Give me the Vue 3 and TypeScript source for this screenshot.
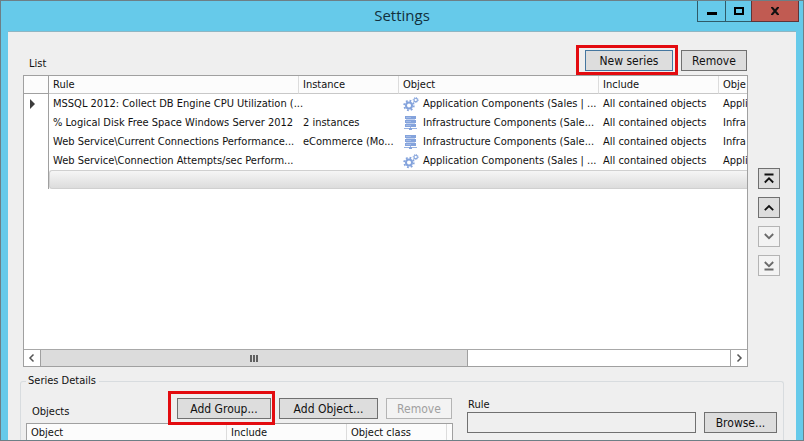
<script setup lang="ts">
import { ref } from 'vue'

type IconKind = 'gears' | 'servers'

interface Series {
  rule: string
  instance: string
  icon: IconKind
  object: string
  include: string
  objectClass: string
}

const series: Series[] = [
  { rule: 'MSSQL 2012: Collect DB Engine CPU Utilization (...', instance: '', icon: 'gears', object: 'Application Components (Sales | ...', include: 'All contained objects', objectClass: 'Appli' },
  { rule: '% Logical Disk Free Space Windows Server 2012', instance: '2 instances', icon: 'servers', object: 'Infrastructure Components (Sale...', include: 'All contained objects', objectClass: 'Infra' },
  { rule: 'Web Service\\Current Connections Performance...', instance: 'eCommerce (Mo...', icon: 'servers', object: 'Infrastructure Components (Sale...', include: 'All contained objects', objectClass: 'Infra' },
  { rule: 'Web Service\\Connection Attempts/sec Perform...', instance: '', icon: 'gears', object: 'Application Components (Sales | ...', include: 'All contained objects', objectClass: 'Appli' },
]

const moves = [
  { label: 'Move to top', path: 'M5.500 5.500h9M5.800 13.500l4.200-4.200 4.200 4.200', disabled: false },
  { label: 'Move up', path: 'M5.800 12.200l4.200-4.200 4.200 4.200', disabled: false },
  { label: 'Move down', path: 'M5.800 7l4.200 4.200 4.200-4.200', disabled: true },
  { label: 'Move to bottom', path: 'M5.800 6l4.200 4.200 4.200-4.200M5.500 13.500h9', disabled: true },
]

const selected = ref(0)
const rule = ref('')
</script>

<template>
  <div class="window">
    <header class="titlebar">
      <h1>Settings</h1>
      <div class="controls">
        <button type="button" class="control" aria-label="Minimize">
          <svg width="12" height="12" viewBox="0 0 12 12"><path d="M1 7h10v3H1z" fill="#000" /></svg>
        </button>
        <button type="button" class="control" aria-label="Maximize">
          <svg width="12" height="12" viewBox="0 0 12 12"><path d="M2 3h8v6H2z" fill="none" stroke="#000" stroke-width="2" /></svg>
        </button>
        <button type="button" class="control close" aria-label="Close">
          <svg width="12" height="12" viewBox="0 0 12 12">
            <path d="M3 2.5L9 9.5M9 2.5L3 9.5" fill="none" stroke="#111" stroke-width="2" />
            <path d="M2 2.5h2M8 2.5h2M2 9.5h2M8 9.5h2" stroke="#111" />
          </svg>
        </button>
      </div>
    </header>

    <main class="client">
      <div class="toolbar">
        <h2>List</h2>
        <span class="marked marked-new"><button type="button" class="btn new focused">New series</button></span>
        <button type="button" class="btn remove">Remove</button>
      </div>

      <div class="list-row">
        <div class="list">
          <div class="viewport">
            <table class="grid series">
              <colgroup>
                <col class="c-marker" /><col class="c-rule" /><col class="c-instance" />
                <col class="c-object" /><col class="c-include" /><col class="c-class" />
              </colgroup>
              <thead>
                <tr>
                  <th class="marker"></th>
                  <th>Rule</th>
                  <th>Instance</th>
                  <th>Object</th>
                  <th>Include</th>
                  <th>Obje</th>
                </tr>
              </thead>
              <tbody>
                <tr v-for="(item, i) in series" :key="i" @click="selected = i">
                  <td class="marker">
                    <svg v-if="selected === i" width="6" height="10" viewBox="0 0 6 10"><path d="M0 0l5 5-5 5z" fill="#3c3c3c" /></svg>
                  </td>
                  <td>{{ item.rule }}</td>
                  <td>{{ item.instance }}</td>
                  <td>
                    <span class="object">
                      <svg v-if="item.icon === 'gears'" width="16" height="16" viewBox="0 0 16 16" fill="none" stroke="#84a3dc">
                        <circle cx="6" cy="9.5" r="3" stroke-width="2" />
                        <circle cx="6" cy="9.5" r="4.8" stroke-width="1.8" stroke-dasharray="1.8 1.97" />
                        <circle cx="12.7" cy="4" r="1.7" stroke-width="1.1" />
                        <circle cx="12.7" cy="4" r="2.5" stroke-width="1" stroke-dasharray="1 .96" />
                      </svg>
                      <svg v-else width="16" height="16" viewBox="0 0 16 16">
                        <path d="M2 1h11v3H2zM2 5h11v3H2zM2 9h11v3H2z" fill="#84a3dc" />
                        <path d="M3 4.500h9M3 8.500h9" stroke="#c3d2ef" />
                        <path d="M3 2.500h5M3 6.500h5M3 10.500h5" stroke="#a3bae6" />
                        <path d="M7.500 12v2M1 13.500h13" stroke="#9ab3e2" />
                        <path d="M6 13h3v2H6z" fill="#84a3dc" />
                      </svg>
                      {{ item.object }}
                    </span>
                  </td>
                  <td>{{ item.include }}</td>
                  <td>{{ item.objectClass }}</td>
                </tr>
                <tr class="blank">
                  <td class="marker"></td>
                  <td colspan="5"></td>
                </tr>
              </tbody>
            </table>
          </div>
          <div class="scrollbar">
            <button type="button" class="arrow" aria-label="Scroll left">
              <svg width="8" height="10" viewBox="0 0 8 10"><path d="M5.500 1.500L2 5l3.500 3.500" fill="none" stroke="#555" stroke-width="1.500" /></svg>
            </button>
            <div class="track">
              <div class="thumb"><i></i><i></i><i></i></div>
            </div>
            <button type="button" class="arrow right" aria-label="Scroll right">
              <svg width="8" height="10" viewBox="0 0 8 10"><path d="M2.500 1.500L6 5 2.500 8.500" fill="none" stroke="#555" stroke-width="1.500" /></svg>
            </button>
          </div>
        </div>
        <div class="moves">
          <button v-for="move in moves" :key="move.label" type="button" class="btn move" :aria-label="move.label" :disabled="move.disabled">
            <svg width="20" height="19" viewBox="0 0 20 19"><path :d="move.path" fill="none" stroke="currentColor" stroke-width="1.800" /></svg>
          </button>
        </div>
      </div>

      <fieldset class="details">
        <legend>Series Details</legend>
        <div class="detail-row">
          <section class="objects">
            <div class="object-bar">
              <h2>Objects</h2>
              <span class="marked marked-group"><button type="button" class="btn group">Add Group...</button></span>
              <button type="button" class="btn add">Add Object...</button>
              <button type="button" class="btn remove" disabled>Remove</button>
            </div>
            <div class="object-list">
              <table class="grid">
                <colgroup><col class="c-name" /><col class="c-include" /><col class="c-kind" /><col /></colgroup>
                <thead>
                  <tr><th>Object</th><th>Include</th><th>Object class</th><th></th></tr>
                </thead>
              </table>
            </div>
          </section>
          <section class="rule">
            <label for="rule">Rule</label>
            <div class="rule-row">
              <input id="rule" v-model="rule" type="text" readonly />
              <button type="button" class="btn browse">Browse...</button>
            </div>
          </section>
        </div>
      </fieldset>
    </main>
  </div>
</template>

<style>
body {
  margin: 0;
  overflow: hidden;
}
</style>

<style scoped>
* {
  box-sizing: border-box;
}

.window {
  display: flex;
  flex-direction: column;
  height: 100vh;
  border: 1px solid #6d7f86;
  background: #66caea;
  color: #111;
  font-family: "DejaVu Sans Condensed", "DejaVu Sans", sans-serif;
  font-size: 11px;
  line-height: 14px;
  overflow: hidden;
}

.titlebar {
  position: relative;
  display: flex;
  justify-content: center;
  flex: none;
  height: 30px;
}

h1 {
  margin: 0;
  color: #12303c;
  font-family: "Open Sans", "Noto Sans", sans-serif;
  font-size: 15px;
  font-weight: 400;
  line-height: 28px;
}

.controls {
  position: absolute;
  top: 0;
  right: 4px;
  display: flex;
}

.control {
  display: flex;
  align-items: center;
  justify-content: center;
  width: 29px;
  height: 21px;
  margin-right: -1px;
  padding: 0;
  border: 1px solid #2f5a68;
  border-top: 0;
  background: #66caea;
}

.control + .control {
  width: 27px;
}

.controls .close {
  width: 48px;
  margin-right: 0;
  border-color: #5e3438;
  background: #c15b52;
}

.client {
  display: flex;
  flex: 1;
  flex-direction: column;
  min-height: 0;
  margin: 0 7px;
  padding: 18px 12px 0;
  border-top: 1px solid #8fb6c3;
  background: #efefef;
}

.toolbar {
  display: flex;
  flex: none;
  align-items: flex-start;
  gap: 8px;
  padding: 0 37px 4px 9px;
}

h2 {
  flex: 1;
  margin: 0;
  font-size: 11px;
  font-weight: 400;
  line-height: 14px;
}

.toolbar h2 {
  padding-top: 7px;
}

.btn {
  display: flex;
  align-items: center;
  justify-content: center;
  height: 21px;
  padding: 0;
  border: 1px solid #707070;
  background: #dddddd;
  color: #111;
  font-family: inherit;
  font-size: 12px;
  line-height: 14px;
}

.btn:disabled {
  border-color: #b4b4b4;
  background: #f3f3f3;
  color: #a0a0a0;
}

.btn.focused {
  border-color: #45769f;
}

.new { width: 88px; }
.remove { width: 66px; }
.group { width: 94px; }
.add { width: 99px; }
.browse { width: 73px; }

.marked {
  position: relative;
}

.marked::after {
  position: absolute;
  z-index: 1;
  border: 3px solid #e30b0f;
  content: "";
  pointer-events: none;
}

.marked-new::after {
  inset: -5px -5px -4px -9px;
}

.marked-group::after {
  inset: -7px -4px -6px -9px;
}

.list-row {
  display: flex;
  flex: 1;
  gap: 10px;
  min-height: 0;
  padding: 0 4px 0 3px;
}

.list {
  display: flex;
  flex: 1;
  flex-direction: column;
  min-width: 0;
  border: 1px solid #a0a0a0;
  background: #fff;
}

.viewport {
  flex: 1;
  min-height: 0;
  overflow: hidden;
}

.grid {
  width: 100%;
  border-spacing: 0;
  border-collapse: separate;
  table-layout: fixed;
}

.c-marker { width: 25px; }
.c-rule { width: 250px; }
.c-instance { width: 100px; }
.c-object { width: 200px; }
.c-include { width: 120px; }
.c-name { width: 200px; }
.c-kind { width: 100px; }

th,
td {
  height: 19px;
  padding: 0 0 0 4px;
  font-weight: 400;
  line-height: 14px;
  text-align: left;
  white-space: nowrap;
}

th {
  height: 18px;
  border-right: 1px solid #dcdcdc;
  border-bottom: 1px solid #c8c8c8;
  background: #fcfcfc;
}

th:last-child,
td:last-child {
  border-right: 0;
}

.marker {
  padding-left: 6px;
  border-right: 1px solid #a0a0a0;
}

th.marker {
  border-bottom-color: #a0a0a0;
}

.marker svg {
  display: block;
}

.blank td + td {
  border: 1px solid #d0d0d0;
  border-right: 0;
  border-radius: 3px 0 0 3px;
  background: linear-gradient(#f6f6f6, #dcdcdc);
}

.object {
  display: flex;
  align-items: center;
  gap: 4px;
}

.object svg {
  flex: none;
}

.scrollbar {
  display: flex;
  flex: none;
  height: 17px;
  border-top: 1px solid #a8a8a8;
  background: #fff;
}

.arrow {
  display: flex;
  align-items: center;
  justify-content: center;
  width: 17px;
  padding: 0;
  border: 0;
  border-right: 1px solid #a0a0a0;
  background: #fff;
}

.arrow.right {
  border-right: 0;
  border-left: 1px solid #a0a0a0;
}

.track {
  display: flex;
  flex: 1;
}

.thumb {
  display: flex;
  align-items: center;
  justify-content: center;
  gap: 1px;
  width: 62%;
  border-right: 1px solid #a0a0a0;
  background: #dcdcdc;
}

.thumb i {
  width: 2px;
  height: 7px;
  background: #606060;
}

.moves {
  display: flex;
  flex: none;
  flex-direction: column;
  gap: 8px;
  padding-top: 93px;
}

.move {
  width: 22px;
}

.move:disabled {
  color: #6a6a6a;
}

.details {
  flex: none;
  min-width: 0;
  height: 66px;
  margin: 7px 0 0;
  padding: 0 6px 0 5px;
  border: 1px solid #d8dcdf;
  border-bottom: 0;
  border-radius: 3px 3px 0 0;
}

legend {
  padding: 0 3px 0 2px;
}

.detail-row {
  display: flex;
  gap: 14px;
  padding-top: 10px;
}

.objects {
  flex: 427;
  min-width: 0;
}

.object-bar {
  display: flex;
  align-items: flex-start;
  gap: 8px;
  padding: 0 1px 4px 6px;
}

.object-bar h2 {
  padding-top: 7px;
}

.object-list {
  height: 40px;
  border: 1px solid #a0a0a0;
  background: #fff;
  overflow: hidden;
}

.rule {
  flex: 310;
  min-width: 0;
}

.rule label {
  display: block;
  padding-left: 1px;
  line-height: 14px;
}

.rule-row {
  display: flex;
  gap: 8px;
}

.rule-row input {
  flex: 1;
  min-width: 0;
  height: 21px;
  padding: 0 4px;
  border: 1px solid #707070;
  background: #efefef;
  font: inherit;
}
</style>
